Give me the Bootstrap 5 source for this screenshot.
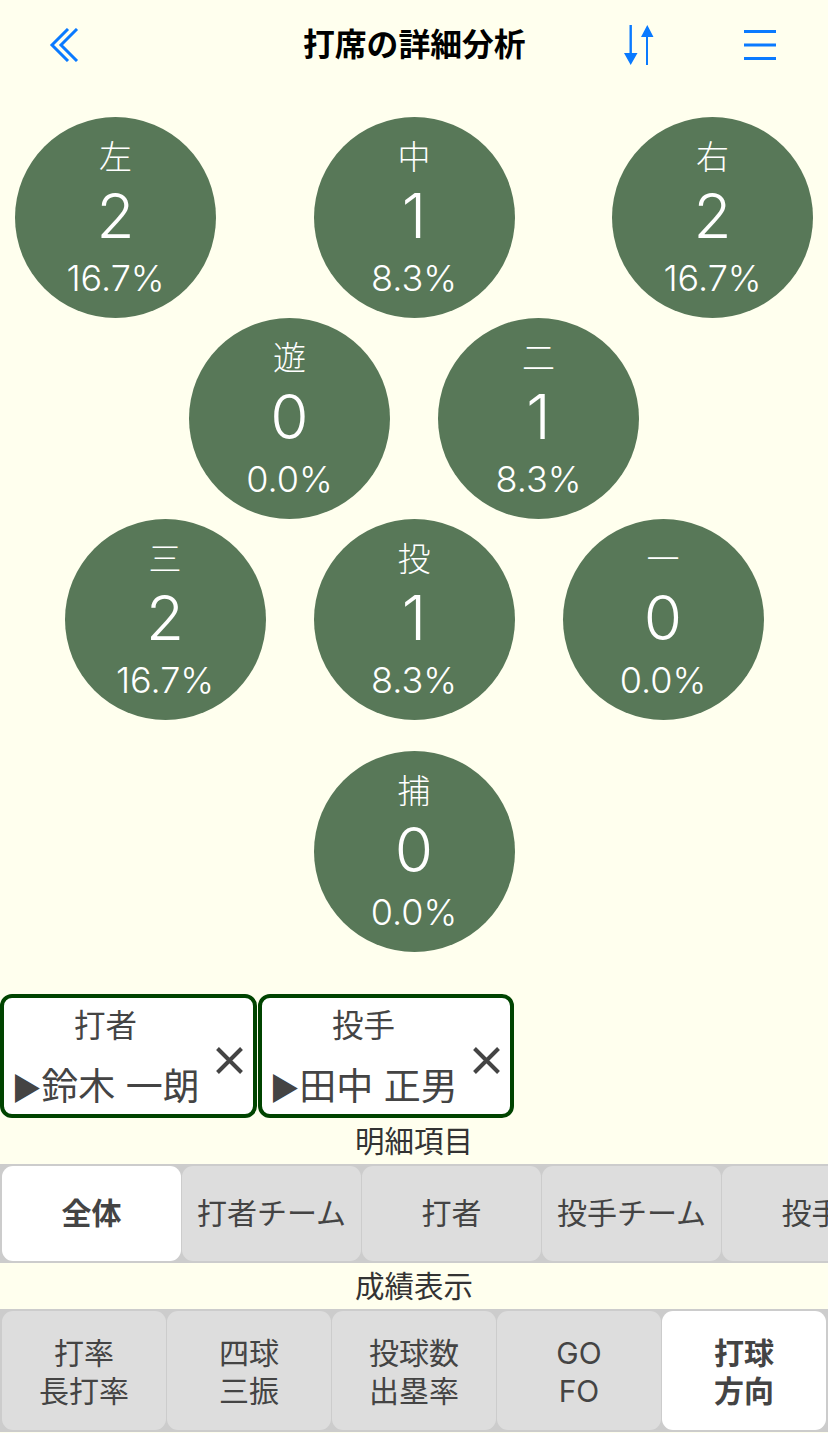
<!DOCTYPE html>
<html lang="ja">
<head>
<meta charset="utf-8">
<title>打席の詳細分析</title>
<link href="https://cdn.jsdelivr.net/npm/bootstrap@5.3.0/dist/css/bootstrap.min.css" rel="stylesheet">
<style>
html,body{height:100%;}
body{background:#ffffee;font-family:"Inter","Noto Sans CJK JP","Liberation Sans",sans-serif;color:#444;width:828px;height:1433px;overflow:hidden;}
.topbar{height:92px;padding:0 0 3px 49px;}
.topttl{font-size:31.8px;font-weight:700;color:#000;line-height:1;margin-left:224px;white-space:nowrap;}
.ic-sort{margin-left:97px;}
.ic-menu{margin-left:89px;}
.diamond{padding-top:25px;}
.line-a{padding:0 15px;}
.line-b{gap:48px;}
.line-c{margin-top:31px;}
.ball{width:201px;height:201px;border-radius:50%;background:#587858;color:#fff;flex:none;font-weight:300;}
.ball-pos{font-size:33px;line-height:1;margin-top:24px;height:35px;}
.ball-n{font-size:62px;line-height:1;height:62px;margin-top:9px;}
.ball-p{font-size:36px;line-height:1;margin-top:12.5px;}
.selrow{margin-top:42px;gap:1px;height:124px;}
.selbox{width:256px;height:124px;background:#fff;border:4px solid #004400;border-radius:12px;padding:0 8px;}
.selbox:first-child{width:257px;}
.selttl{font-size:31.5px;line-height:1;margin-top:12px;padding-left:62px;}
.selname{font-size:37px;line-height:1;margin-top:26px;white-space:nowrap;}
.selname span{font-size:32px;}
.selx{position:absolute;right:10px;top:49px;}
.sect{font-size:29.5px;line-height:46px;text-align:center;color:#333;}
.tabbar{background:#ccc;padding:2px;gap:1px;overflow:hidden;box-sizing:content-box;}
.tab-a{height:95px;}
.tab-b{height:119px;}
.tabitem{background:#ddd;border-radius:11px;font-size:30px;line-height:38px;text-align:center;flex:none;}
.tab-a .tabitem{width:179px;padding-bottom:2px;}
.tab-b .tabitem{width:164px;padding-top:3px;}
.tabitem.on{background:#fff;font-weight:700;}
</style>
</head>
<body>
<header class="topbar d-flex align-items-center">
  <svg width="30" height="34" viewBox="0 0 30 34" fill="none" stroke="#0a7aff" stroke-width="3"><path d="M19 1 3 17 19 33M28 1 12 17 28 33"/></svg>
  <div class="topttl">打席の詳細分析</div>
  <svg class="ic-sort" width="32" height="40" viewBox="0 0 32 40" fill="#0a7aff"><path d="M6.500 0h2.400v28H14.500L7.700 40 1 28h5.500zM25 12h5.500L24.300 0 18 12h5v28h2z"/></svg>
  <svg class="ic-menu" width="32" height="30" viewBox="0 0 32 30" fill="#0a7aff"><path d="M0 0h32v3H0zM0 13.500h32v3H0zM0 27h32v3H0z"/></svg>
</header>
<main class="diamond">
  <div class="line-a d-flex justify-content-between">
    <div class="ball text-center"><div class="ball-pos">左</div><div class="ball-n">2</div><div class="ball-p">16.7%</div></div>
    <div class="ball text-center"><div class="ball-pos">中</div><div class="ball-n">1</div><div class="ball-p">8.3%</div></div>
    <div class="ball text-center"><div class="ball-pos">右</div><div class="ball-n">2</div><div class="ball-p">16.7%</div></div>
  </div>
  <div class="line-b d-flex justify-content-center">
    <div class="ball text-center"><div class="ball-pos">遊</div><div class="ball-n">0</div><div class="ball-p">0.0%</div></div>
    <div class="ball text-center"><div class="ball-pos">二</div><div class="ball-n">1</div><div class="ball-p">8.3%</div></div>
  </div>
  <div class="line-b d-flex justify-content-center">
    <div class="ball text-center"><div class="ball-pos">三</div><div class="ball-n">2</div><div class="ball-p">16.7%</div></div>
    <div class="ball text-center"><div class="ball-pos">投</div><div class="ball-n">1</div><div class="ball-p">8.3%</div></div>
    <div class="ball text-center"><div class="ball-pos">一</div><div class="ball-n">0</div><div class="ball-p">0.0%</div></div>
  </div>
  <div class="line-c d-flex justify-content-center">
    <div class="ball text-center"><div class="ball-pos">捕</div><div class="ball-n">0</div><div class="ball-p">0.0%</div></div>
  </div>
</main>
<section class="selrow d-flex">
  <div class="selbox position-relative">
    <div class="selttl">打者</div>
    <div class="selname"><span>▶</span>鈴木 一朗</div>
    <svg class="selx" width="27" height="27" viewBox="0 0 27 27" stroke="#444" stroke-width="4"><path d="M1.500 1.500 25.500 25.500M25.500 1.500 1.500 25.500"/></svg>
  </div>
  <div class="selbox position-relative">
    <div class="selttl">投手</div>
    <div class="selname"><span>▶</span>田中 正男</div>
    <svg class="selx" width="27" height="27" viewBox="0 0 27 27" stroke="#444" stroke-width="4"><path d="M1.500 1.500 25.500 25.500M25.500 1.500 1.500 25.500"/></svg>
  </div>
</section>
<div class="sect">明細項目</div>
<nav class="tabbar tab-a d-flex">
  <div class="tabitem on d-flex align-items-center justify-content-center">全体</div>
  <div class="tabitem d-flex align-items-center justify-content-center">打者チーム</div>
  <div class="tabitem d-flex align-items-center justify-content-center">打者</div>
  <div class="tabitem d-flex align-items-center justify-content-center">投手チーム</div>
  <div class="tabitem d-flex align-items-center justify-content-center">投手</div>
</nav>
<div class="sect">成績表示</div>
<nav class="tabbar tab-b d-flex">
  <div class="tabitem d-flex align-items-center justify-content-center">打率<br>長打率</div>
  <div class="tabitem d-flex align-items-center justify-content-center">四球<br>三振</div>
  <div class="tabitem d-flex align-items-center justify-content-center">投球数<br>出塁率</div>
  <div class="tabitem d-flex align-items-center justify-content-center">GO<br>FO</div>
  <div class="tabitem on d-flex align-items-center justify-content-center">打球<br>方向</div>
</nav>
<script src="https://cdn.jsdelivr.net/npm/bootstrap@5.3.0/dist/js/bootstrap.bundle.min.js"></script>
</body>
</html>
